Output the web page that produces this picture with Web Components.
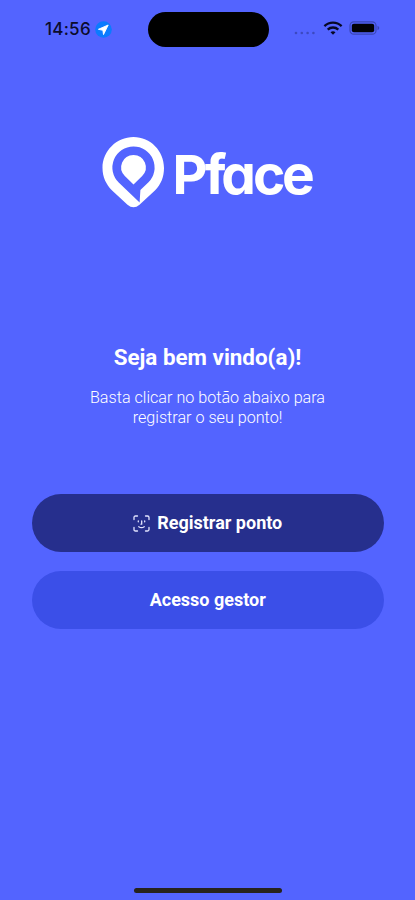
<!DOCTYPE html>
<html lang="pt-BR">
<head>
<meta charset="utf-8">
<title>Pface</title>
<style>
html,body{margin:0;height:100%;background:#5364ff}
</style>
</head>
<body>
<pface-app></pface-app>
<script>
function define(name, html) {
  const t = document.createElement('template');
  t.innerHTML = html;
  customElements.define(name, class extends HTMLElement {
    constructor() {
      super();
      this.attachShadow({mode: 'open'}).append(t.content.cloneNode(true));
    }
  });
}

define('status-bar', `
<style>
:host{display:grid;grid-template-columns:147.5px 121px 1fr;height:58px;align-items:center;box-sizing:border-box;color:#0b0c2c}
.left{display:flex;align-items:center;gap:4px;padding-left:45px}
.time{font:500 17px/20px Inter,sans-serif;letter-spacing:.25px;width:46px;white-space:nowrap}
.island{height:35px;border-radius:18px;background:#000}
.right{display:flex;align-items:center;padding-left:25.500px}
svg{display:block;flex:none}
.dots{margin-top:8px}
.wifi{margin-left:7px;margin-top:-2px}
.bat{margin-left:6px;margin-top:-2px}
</style>
<div class="left"><span class="time">14:56</span>
<svg width="17" height="17" viewBox="0 0 17 17"><circle cx="8.5" cy="8.5" r="8.3" fill="#0a7bff"/><path d="M13.2 4 3.4 8.300l4.500 1 .6 4.300z" fill="#fff" stroke="#fff" stroke-width=".9" stroke-linejoin="round"/></svg></div>
<div class="island"></div>
<div class="right">
<svg class="dots" width="22" height="4" viewBox="0 0 22 4" fill="#3c49c0"><circle cx="2" cy="2" r="1.3"/><circle cx="7.8" cy="2" r="1.3"/><circle cx="13.6" cy="2" r="1.3"/><circle cx="19.4" cy="2" r="1.3"/></svg>
<svg class="wifi" width="20" height="14" viewBox="0 0 20 14" fill="none" stroke="#070824" stroke-width="2.3"><path d="M1.4 5.100a12.400 12.400 0 0 1 17.200 0"/><path d="M4.700 8.600a7.700 7.700 0 0 1 10.600 0"/><path d="M10 13.800 7.500 11.300a3.700 3.700 0 0 1 5 0z" fill="#070824" stroke="none"/></svg>
<svg class="bat" width="32" height="14" viewBox="0 0 32 14"><rect x="1" y=".8" width="26" height="12.4" rx="3.8" fill="none" stroke="#3a46b7" stroke-width="1.200"/><rect x="2.800" y="2.700" width="22.400" height="8.600" rx="2" fill="#020207"/><path d="M28.500 4.800q1.800.7 1.800 2.200t-1.800 2.200z" fill="#3a46b7"/></svg>
</div>`);

define('pface-logo', `
<style>
:host{display:block;width:212px;height:74px}
svg{display:block;overflow:visible}
text{font:700 55px/74px Inter,sans-serif;font-feature-settings:"cv11" 1}
.p{font-size:54px}
</style>
<svg width="222" height="74" viewBox="0 0 222 74" fill="#fff">
<path fill-rule="evenodd" d="M31.500 1C14.500 1 .5 15 .5 32c0 9 3.600 16.500 9.600 22.500L25.500 68.800q6 5 12 0L52.900 54.500C59 48.500 62 41 62 32 62 15 48.500 1 31.500 1ZM31.500 10.500a21 21 0 0 0-14.800 36L37.600 66.500l.8-12.500L46.500 46.300A21 21 0 0 0 31.500 10.500Z"/>
<path d="M31.500 19a12.300 12.300 0 0 0-8.700 21L31.500 48.400 40.200 40A12.300 12.300 0 0 0 31.500 19Z"/>
<text x="70.500 102.800 119.300 151 180" y="57.800"><tspan class="p">P</tspan>face</text>
</svg>`);

define('welcome-text', `
<style>
:host{display:block;text-align:center;color:#fff;font-family:Roboto,sans-serif}
h1{margin:0;font-size:22.400px;line-height:28px;font-weight:700}
p{margin:17px 0 0;font-size:16.150px;line-height:20px;font-weight:300}
</style>
<h1><slot name="title"></slot></h1><p><slot></slot></p>`);

define('pill-button', `
<style>
:host{display:block}
button{display:flex;width:100%;height:58px;border:0;border-radius:29px;padding:0;align-items:center;justify-content:center;gap:7px;background:var(--fill);color:#fff;font:700 18px/22px Roboto,sans-serif}
</style>
<button><slot name="icon"></slot><span><slot></slot></span></button>`);

define('face-icon', `
<style>:host{display:block}svg{display:block}</style>
<svg width="17" height="17" viewBox="0 0 17 17" fill="none" stroke="#e4e6ff" stroke-width="1.300" stroke-linecap="round" stroke-linejoin="round"><path d="M1 4.500V2.500Q1 1 2.500 1h2M12.500 1h2Q16 1 16 2.500v2M16 12.500v2q0 1.500-1.500 1.500h-2M4.500 16h-2Q1 16 1 14.500v-2M5.300 6v.8M11.700 6v.8M8.700 6v3.200H8M5.800 11.700q2.700 2 5.400 0"/></svg>`);

define('pface-app', `
<style>
:host{display:flex;flex-direction:column;width:415px;height:900px;background:#5364ff;overflow:hidden}
.logo{display:flex;justify-content:center;padding-top:78px}
welcome-text{margin-top:133px}
.actions{display:grid;gap:18.500px;margin:66px 31px 0 31.500px}
.home{margin:auto auto 7.500px 134px;width:148px;height:4.500px;border-radius:3px;background:#27231c}
</style>
<status-bar></status-bar>
<div class="logo"><pface-logo></pface-logo></div>
<welcome-text><span slot="title">Seja bem vindo(a)!</span>Basta clicar no botão abaixo para<br>registrar o seu ponto!</welcome-text>
<div class="actions">
<pill-button style="--fill:#262f8d"><face-icon slot="icon"></face-icon>Registrar ponto</pill-button>
<pill-button style="--fill:#3b4fe8">Acesso gestor</pill-button>
</div>
<div class="home"></div>`);
</script>
</body>
</html>
